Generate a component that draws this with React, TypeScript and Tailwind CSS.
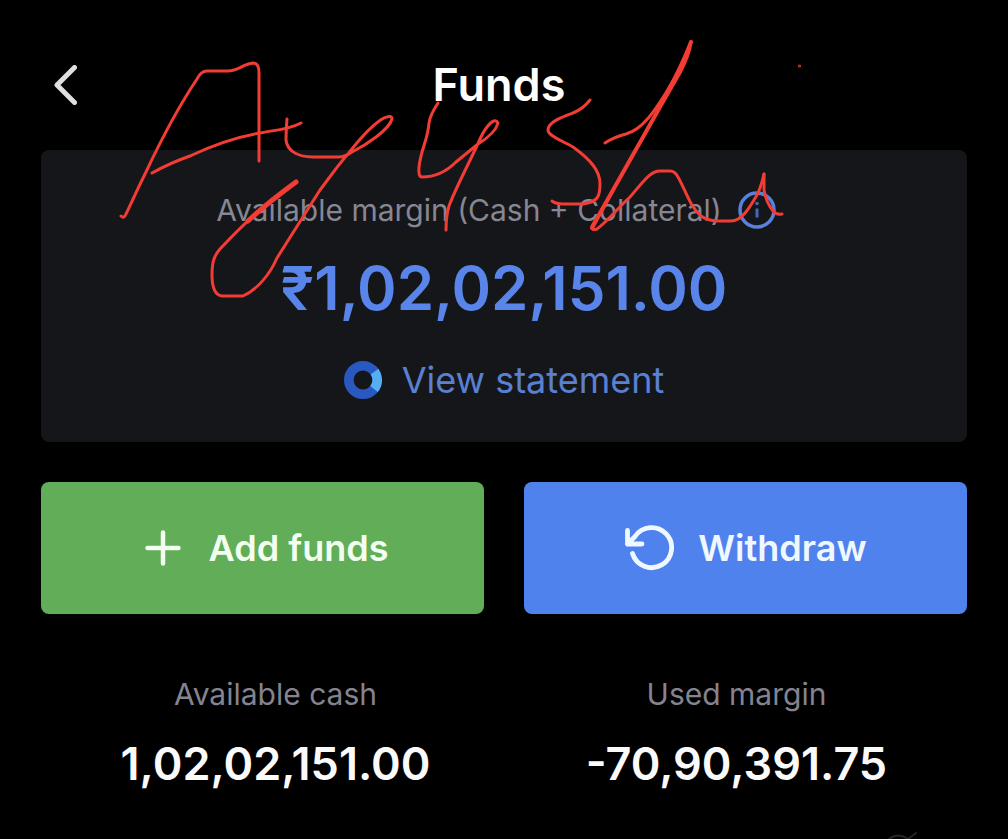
import React from 'react';

interface BalanceProps {
  label: string;
  value: string;
}

const BackIcon: React.FC = () => (
  <svg viewBox="0 0 24 40" className="h-10 w-6" fill="none" aria-hidden="true">
    <path d="M21.500 2.500 4 20l17.500 17.500" stroke="#dfe0dd" strokeWidth="5" strokeLinecap="round" strokeLinejoin="round" />
  </svg>
);

const InfoIcon: React.FC = () => (
  <svg viewBox="0 0 38 38" className="size-[38px]" fill="none" aria-hidden="true">
    <circle cx="19" cy="19" r="17" stroke="#5682dc" strokeWidth="3.500" />
    <path d="M19 17.500v9" stroke="#4268b8" strokeWidth="3" />
    <circle cx="19" cy="12.500" r="1.800" fill="#4268b8" />
  </svg>
);

const StatementIcon: React.FC = () => (
  <svg viewBox="0 0 38 38" className="size-[38px]" fill="none" aria-hidden="true">
    <circle cx="19" cy="19" r="14.200" stroke="#2858c0" strokeWidth="9.600" />
    <path d="M30.500 10.600A14.200 14.200 0 0 1 30 28" stroke="#55aef2" strokeWidth="9.600" />
  </svg>
);

const PlusIcon: React.FC = () => (
  <svg viewBox="0 0 36 36" className="size-9" fill="none" aria-hidden="true">
    <path d="M18 2.500v31M2.500 18h31" stroke="#f2fff0" strokeWidth="4.500" strokeLinecap="round" />
  </svg>
);

const WithdrawIcon: React.FC = () => (
  <svg viewBox="0 0 50 46" className="h-[46px] w-[50px]" fill="none" aria-hidden="true">
    <path
      d="M8.500 28.500A20 20 0 1 0 11 11.500L3.500 19M3.500 5.500v13.500H18"
      stroke="#f0f8ff"
      strokeWidth="4.800"
      strokeLinecap="round"
      strokeLinejoin="round"
    />
  </svg>
);

// Handwritten signature drawn over the screen
const Signature: React.FC = () => (
  <svg
    viewBox="0 0 1008 839"
    className="pointer-events-none absolute inset-x-0 top-0 w-full"
    fill="none"
    stroke="#f33c34"
    strokeWidth="3"
    strokeLinecap="round"
    strokeLinejoin="round"
    aria-hidden="true"
  >
    <path d="M121 216Q124 219 126 214C131 204 135 194 146 172C161 140 181 103 197 79Q201 71 207 71H228C238 71 243 64 253 63Q259 63 259 73V161" />
    <path d="M152 173Q170 163 190 156C224 140 248 135 260 133C274 130 288 130 301 123" />
    <path d="M287 119Q286 129 286 140C287 149 295 157 313 157H338Q345 157 352 152C366 145 389 130 392 119Q392 114 382 119C370 127 358 141 348 154C338 165 330 177 320 190L277 258C270 274 258 289 243 296H222C214 295 212 284 212 275C212 262 214 256 220 249C234 234 246 222 258 212" />
    <path d="M248 221Q266 204 296 182" strokeWidth="5" />
    <path d="M438 103Q430 115 429 123C428 139 421 149 419 167Q418 177 422 177C438 177 448 170 456 162L478 144C486 139 496 131 498 123Q495 117 487 127C480 136 479 143 474 152C464 173 455 190 449 206Q446 216 446 230" />
    <path d="M590 100Q583 109 573 113C562 117 548 122 548 130C548 136 561 140 573 147C591 160 600 171 600 184C600 196 598 202 583 204H563Q556 204 552 201" />
    <path d="M605 143Q614 137 626 134C644 129 657 107 667 91C675 78 684 59 691 42Q690 54 680 73L630 160L592 226Q591 231 597 229C607 222 616 210 630 197C643 182 650 171 660 171H670Q675 171 678 177C686 191 690 207 701 216Q708 221 719 221H731C742 221 750 207 757 195Q761 187 764 174" />
    <path d="M691 42C676 83 646 130 592 228" strokeWidth="4" />
    <path d="M764 174V190Q766 202 773 211Q776 215 782 214" />
    <circle cx="799.500" cy="66" r="0.500" strokeWidth="2" />
    <path d="M886 842Q896 831 908 839L916 833" stroke="#242424" strokeWidth="2" />
  </svg>
);

const Balance: React.FC<BalanceProps> = ({ label, value }) => (
  <div className="flex flex-col items-center">
    <dt className="text-[30px] leading-10 text-[#848490]">{label}</dt>
    <dd className="mt-6 text-[45px] leading-[52px] font-semibold text-[#fafafa]">{value}</dd>
  </div>
);

export default function App() {
  return (
    <div className="relative min-h-screen overflow-hidden bg-black px-[41px] pb-[50px] font-['Inter','Liberation_Sans',sans-serif]">
      <header className="flex h-[150px] items-center pt-5">
        <button type="button" aria-label="Back" className="flex w-[50px] pl-3">
          <BackIcon />
        </button>
        <h1 className="flex-1 text-center text-[45px] leading-[52px] font-semibold text-white">Funds</h1>
        <div className="w-[60px]" />
      </header>

      <main>
        <section className="flex h-[292px] flex-col items-center rounded-lg bg-[#15161a] pt-10">
          <div className="flex items-center gap-4 pr-4">
            <p className="text-[30px] leading-10 text-[#868793]">
              Available margin (Cash + Collateral)
            </p>
            <button type="button" aria-label="About available margin">
              <InfoIcon />
            </button>
          </div>
          <p className="mt-[22px] text-[60px] leading-[72px] font-semibold text-[#5985ea]">₹1,02,02,151.00</p>
          <a href="#statement" className="mt-[34px] flex items-center gap-5 text-[36px] leading-11 text-[#5a80d2]">
            <StatementIcon />
            View statement
          </a>
        </section>

        <div className="mt-10 grid grid-cols-2 gap-10">
          <button
            type="button"
            className="flex h-[132px] items-center justify-center gap-7 rounded-lg bg-[#62ad58] pl-2 text-[36px] font-semibold text-[#f2fff0]"
          >
            <PlusIcon />
            Add funds
          </button>
          <button
            type="button"
            className="flex h-[132px] items-center justify-center gap-6 rounded-lg bg-[#5082ee] text-[36px] font-semibold text-[#f0f8ff]"
          >
            <WithdrawIcon />
            Withdraw
          </button>
        </div>

        <dl className="mt-[60px] grid grid-cols-2 pl-1">
          <Balance label="Available cash" value="1,02,02,151.00" />
          <Balance label="Used margin" value="-70,90,391.75" />
        </dl>
      </main>

      <Signature />
    </div>
  );
}
